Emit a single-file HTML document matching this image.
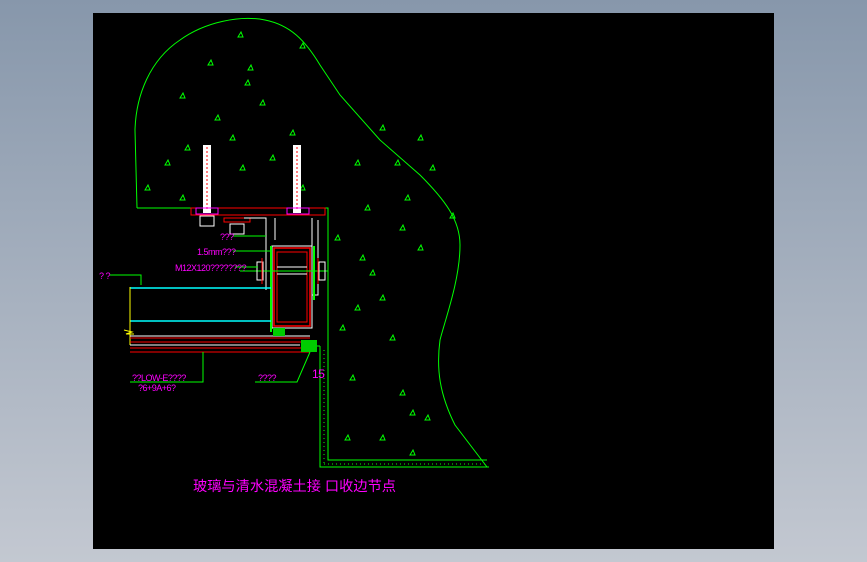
<!DOCTYPE html>
<html><head><meta charset="utf-8"><style>
html,body{margin:0;padding:0;width:867px;height:562px;overflow:hidden;background:linear-gradient(#8797ab,#c3c8d1);}
svg{position:absolute;left:0;top:0}
text{font-family:"Liberation Sans","Noto Sans CJK SC",sans-serif;fill:#ff00ff}
</style></head><body>
<svg width="867" height="562" viewBox="0 0 867 562">
<rect x="93" y="13" width="681" height="536" fill="#000"/>
<g fill="none" stroke="#00ff00" stroke-width="1">
<path d="M137,208 L135,130 C136,95 150,60 180,40 C205,22 240,15 265,20 C290,25 305,40 320,65 L340,95 L380,140 L420,175 C445,200 460,220 460,245 C460,280 445,320 440,340 C436,370 440,395 455,425 L487,467"/>
<path d="M137,208 H328 V460 H487"/>
<path d="M320,346 V467 H489"/>
<path d="M308,346 H320"/>
</g>
<g fill="none" stroke="#00ff00" stroke-width="1" stroke-dasharray="1 3">
<path d="M324,350 V463 M324,464 H486"/>
</g>
<g fill="none" stroke="#00ff00" stroke-width="1">
<path d="M238,37 l3,-5 l2,5z M248,70 l3,-5 l2,5z M180,98 l3,-5 l2,5z M215,120 l3,-5 l2,5z M290,135 l3,-5 l2,5z M165,165 l3,-5 l2,5z M240,170 l3,-5 l2,5z M300,190 l3,-5 l2,5z M145,190 l3,-5 l2,5z M180,200 l3,-5 l2,5z M380,130 l3,-5 l2,5z M355,165 l3,-5 l2,5z M405,200 l3,-5 l2,5z M365,210 l3,-5 l2,5z M400,230 l3,-5 l2,5z M360,260 l3,-5 l2,5z M380,300 l3,-5 l2,5z M340,330 l3,-5 l2,5z M390,340 l3,-5 l2,5z M350,380 l3,-5 l2,5z M400,395 l3,-5 l2,5z M380,440 l3,-5 l2,5z M425,420 l3,-5 l2,5z M345,440 l3,-5 l2,5z M410,415 l3,-5 l2,5z M355,310 l3,-5 l2,5z M418,140 l3,-5 l2,5z M450,218 l3,-5 l2,5z M300,48 l3,-5 l2,5z M208,65 l3,-5 l2,5z M260,105 l3,-5 l2,5z M185,150 l3,-5 l2,5z M270,160 l3,-5 l2,5z M418,250 l3,-5 l2,5z M370,275 l3,-5 l2,5z M410,455 l3,-5 l2,5z M430,170 l3,-5 l2,5z M335,240 l3,-5 l2,5z M395,165 l3,-5 l2,5z M230,140 l3,-5 l2,5z M245,85 l3,-5 l2,5z"/>
</g>
<g>
<rect x="203" y="145" width="8" height="68" fill="#fff"/>
<path d="M207,147 V211" stroke="#ff0000" stroke-dasharray="2 2"/>
<rect x="293" y="145" width="8" height="68" fill="#fff"/>
<path d="M297,147 V211" stroke="#ff0000" stroke-dasharray="2 2"/>
<rect x="191" y="208" width="134" height="7" fill="none" stroke="#ff0000"/>
<rect x="196" y="208" width="22" height="6" fill="none" stroke="#ff00ff"/>
<rect x="287" y="208" width="22" height="6" fill="none" stroke="#ff00ff"/>
<rect x="200" y="216" width="14" height="10" fill="none" stroke="#fff"/>
<rect x="224" y="218" width="26" height="4" fill="none" stroke="#ff0000"/>
<rect x="230" y="224" width="14" height="10" fill="none" stroke="#fff"/>
<path d="M244,218 H266 V290 M275,218 V240 M312,218 V295 H318 V220" fill="none" stroke="#fff"/>
<rect x="272" y="246" width="40" height="82" fill="none" stroke="#fff"/>
<rect x="274" y="248" width="36" height="78" fill="none" stroke="#ff0000" stroke-width="1.5"/>
<rect x="277" y="252" width="30" height="70" fill="none" stroke="#ff0000"/>
<path d="M277,267 H307 M277,274 H307" stroke="#fff"/>
<path d="M271,246 V332 M314,246 V300" stroke="#00ff00" stroke-width="2"/>
<path d="M240,271 H328" stroke="#00ff00"/>
<rect x="257" y="262" width="6" height="18" fill="none" stroke="#fff"/>
<rect x="319" y="262" width="6" height="18" fill="none" stroke="#fff"/>
<path d="M262,258 V284 M318,258 V284" stroke="#ff0000"/>
</g>
<path d="M130,288 H271 M130,321 H271" stroke="#00ffff" stroke-width="1.5"/>
<path d="M130,287 V345" stroke="#ffff00"/>
<path d="M124,330 L132,332 L126,334 L134,334" stroke="#ffff00" fill="none"/>
<path d="M130,338 H310 M130,342 H310 M130,348 H310 M130,352 H310" stroke="#ff0000" stroke-width="1"/>
<path d="M130,336 H310 M130,345 H300" stroke="#fff"/>
<rect x="301" y="340" width="16" height="12" fill="#00cc00"/>
<rect x="273" y="328" width="12" height="8" fill="#00cc00"/>
<g stroke="#00ff00" fill="none">
<path d="M233,236 H266 M233,251 H270 M235,267 H258 M110,275 H141 V285 M203,352 V382 H130 M255,382 H297 L310,352"/>
</g>
<g font-size="9" style="letter-spacing:-0.5px">
<text x="220" y="240">???</text>
<text x="197" y="255">1.5mm???</text>
<text x="175" y="271">M12X120????????</text>
<text x="99" y="279">? ?</text>
<text x="132" y="381">??LOW-E????</text>
<text x="138" y="391">?6+9A+6?</text>
<text x="258" y="381">????</text>
<text x="312" y="378" font-size="12">15</text>
</g>
<text x="193" y="491" font-size="14" textLength="203" lengthAdjust="spacingAndGlyphs">玻璃与清水混凝土接 口收边节点</text>
</svg>
</body></html>
